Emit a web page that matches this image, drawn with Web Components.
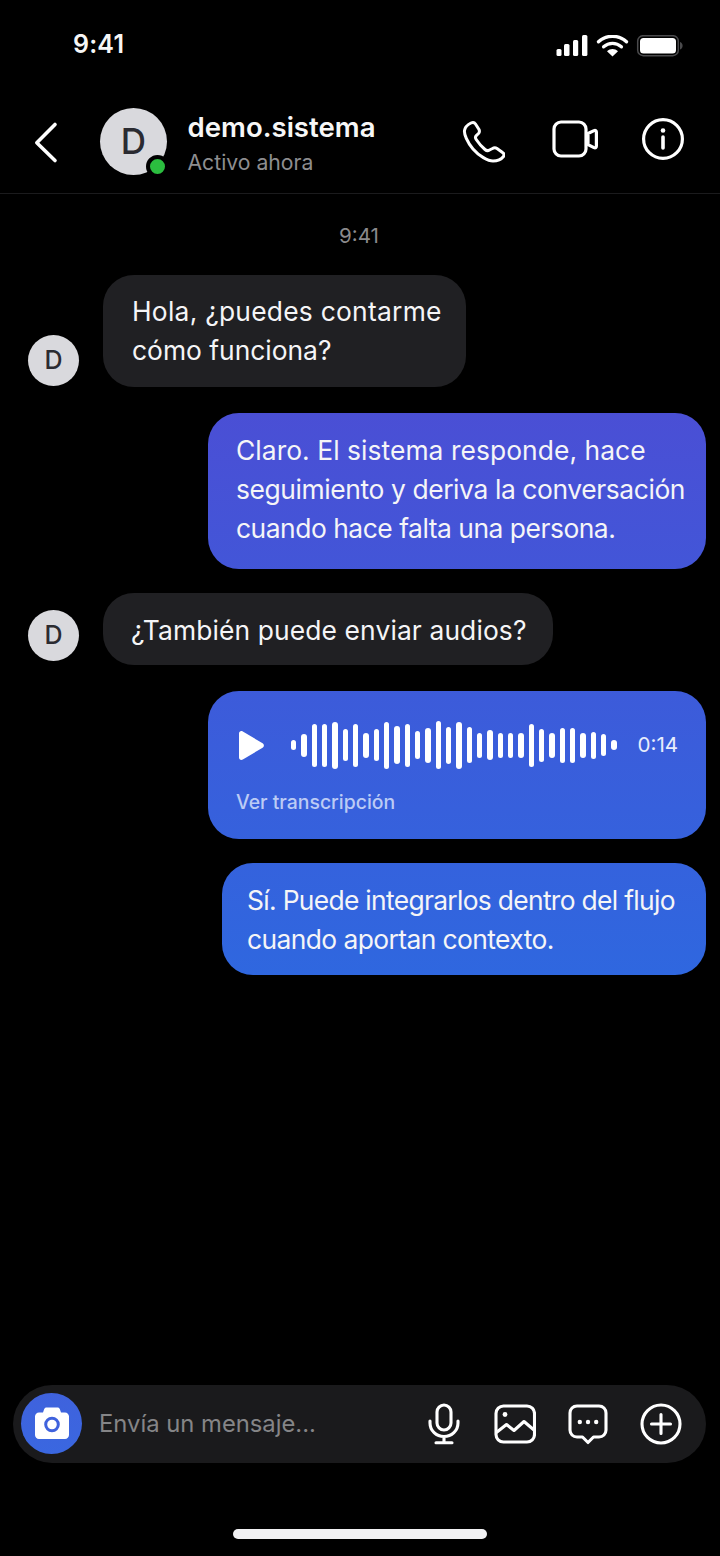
<!DOCTYPE html>
<html lang="es"><head><meta charset="utf-8"><title>Chat</title>
<style>
html,body{margin:0;padding:0;background:#000}
body{font-family:Inter,"Liberation Sans",sans-serif;color:#fff}
chat-message span{display:block}
</style></head>
<body>
<chat-screen>
  <status-bar slot="top" time="9:41"></status-bar>
  <chat-header slot="top" name="demo.sistema" status="Activo ahora"></chat-header>
  <time-stamp>9:41</time-stamp>
  <chat-message style="margin-top:26px;margin-left:28px;--w:363px;--avb:1px;--pt:17px;--pb:17px"><span style="letter-spacing:.25px">Hola, ¿puedes contarme</span><span>cómo funciona?</span></chat-message>
  <chat-message out style="margin-top:26px;--w:498px;--pl:28px;--pt:17.5px;--pb:21.5px"><span style="letter-spacing:.06px">Claro. El sistema responde, hace</span><span style="letter-spacing:-.39px">seguimiento y deriva la conversación</span><span style="letter-spacing:-.47px">cuando hace falta una persona.</span></chat-message>
  <chat-message style="margin-top:24px;margin-left:28px;--w:450px;--avb:4px;--pt:17.5px;--pb:15.5px;--pl:28px"><span style="letter-spacing:.12px">¿También puede enviar audios?</span></chat-message>
  <audio-message style="margin-top:26px" duration="0:14" link="Ver transcripción"></audio-message>
  <chat-message out style="margin-top:24px;--w:484px;--pl:25px;--pt:17.5px;--pb:16.5px"><span style="letter-spacing:-.68px">Sí. Puede integrarlos dentro del flujo</span><span style="letter-spacing:-.58px">cuando aportan contexto.</span></chat-message>
  <chat-composer slot="bottom" placeholder="Envía un mensaje..."></chat-composer>
</chat-screen>
<script>
function comp(name, html){
  customElements.define(name, class extends HTMLElement{
    connectedCallback(){
      if(this.shadowRoot) return;
      const r=this.attachShadow({mode:'open'});
      r.innerHTML=typeof html==='function'?html(this):html;
    }
  });
}
const GRAD='linear-gradient(180deg,#4a4fd5 0,#4a4fd5 413px,#2f67df 975px) fixed';
comp('chat-screen',`<style>
:host{display:flex;flex-direction:column;width:720px;height:1556px;background:#000;overflow:hidden;box-sizing:border-box}
main{flex:1;display:flex;flex-direction:column;min-height:0}
.home{height:10px;width:254px;border-radius:5px;background:#f1f1f3;margin:65px auto 17px}
</style>
<slot name="top"></slot><main><slot></slot></main><slot name="bottom"></slot><div class="home"></div>`);

comp('status-bar',h=>`<style>
:host{display:flex;height:88px;box-sizing:border-box;padding:0 37px 0 73px;justify-content:space-between;align-items:flex-start}
.t{font:600 25px/30px Inter,"Liberation Sans",sans-serif;margin-top:29px;color:#f6f6f6;letter-spacing:.2px}
svg{display:block;margin-top:35px}
</style>
<div class="t">${h.getAttribute('time')}</div>
<svg width="127" height="22" viewBox="0 0 127 22" fill="#fff">
  <rect x="0.5" y="14" width="5" height="7" rx="1.5"/><rect x="8" y="9" width="5.5" height="12" rx="1.5"/>
  <rect x="17" y="5" width="5.2" height="16" rx="1.5"/><rect x="26" y="0" width="5.4" height="21" rx="1.5"/>
  <g fill="none" stroke="#fff" stroke-width="3.3" stroke-linecap="round">
    <path d="M42.5 6.8C50.5 -0.6 62.5 -0.6 70.5 6.8"/><path d="M47.6 11.8C52.8 7.2 60.2 7.2 65.4 11.8"/>
  </g>
  <path d="M51 16.2C54.3 13.3 58.7 13.3 62 16.2L56.5 21.6Z"/>
  <rect x="81.7" y="0.7" width="40.6" height="20" rx="5.5" fill="none" stroke="#4a4a4c" stroke-width="1.5"/>
  <rect x="84" y="3" width="36" height="15.6" rx="3.5"/>
  <path d="M124 7C125.7 7.6 126.6 9 126.6 10.8C126.6 12.6 125.7 14 124 14.6Z" fill="#4a4a4c"/>
</svg>`);

comp('chat-header',h=>`<style>
:host{display:flex;align-items:flex-start;height:106px;box-sizing:border-box;border-bottom:1px solid #1b1b1d;position:relative}
.back{margin:33px 0 0 33px;width:26px;height:44px;display:block;flex:none}
.av{position:relative;width:67px;height:67px;border-radius:50%;background:#d9d9dd;color:#2b2b31;margin:20px 0 0 41px;display:flex;align-items:center;justify-content:center;font:500 35px/1 Inter,"Liberation Sans",sans-serif;flex:none}
.dot{position:absolute;right:-2px;bottom:-3px;width:15px;height:15px;border-radius:50%;background:#2bbd3f;border:4px solid #000}
.tx{margin:21px 0 0 20.5px;flex:1}
.n{font:600 27.6px/36px Inter,"Liberation Sans",sans-serif;color:#f7f7f7}
.s{font:400 21.2px/26px Inter,"Liberation Sans",sans-serif;color:#8e8e90;margin-top:4px}
svg.i{display:block;flex:none}
.icons{display:flex;margin:32px 35px 0 0;align-items:flex-start;gap:0}
</style>
<svg class="back" viewBox="0 0 26 44" fill="none" stroke="#fff" stroke-width="3.6" stroke-linecap="round" stroke-linejoin="round"><path d="M22 3.5L3.8 21.8L22 39.5"/></svg>
<div class="av">D<span class="dot"></span></div>
<div class="tx"><div class="n">${h.getAttribute('name')}</div><div class="s">${h.getAttribute('status')}</div></div>
<div class="icons">
<svg class="i" width="45" height="45" viewBox="0 0 45 45" fill="none" stroke="#fff" stroke-width="3" stroke-linejoin="round" style="margin-top:0;margin-right:47px"><path d="M11 3C8 4.5 5 7.5 4.5 10.5C4 14 7 22 13 29C19 36 28 41 33 41C37 41 41.5 39 43.5 36.5C44.5 35 44 33.5 42.5 32.5L37 28.5C35.5 27.5 34 27.5 32.5 28.5L29.5 30C28 31 26.5 30.8 25 29.5C21.5 26.5 18.5 23 16.2 19.5C15.2 18 15.2 16.5 16.5 15.3L18.5 13.5C19.6 12.2 19.7 11 19 9.5L15.5 4C14.5 2.5 12.7 2.2 11 3Z"/></svg>
<svg class="i" width="46" height="40" viewBox="0 0 46 40" fill="none" stroke="#fff" stroke-width="3.2" stroke-linejoin="round" style="margin-right:43px"><rect x="2" y="2" width="32" height="34" rx="7"/><path d="M36 13.5L42 10.6C43.4 10 44.4 10.6 44.4 12V26C44.4 27.6 43.4 28.2 42 27.6L36 24.6Z"/></svg>
<svg class="i" width="44" height="44" viewBox="0 0 44 44" fill="none" stroke="#fff" stroke-width="3.2" stroke-linecap="round" style="margin-top:-3px"><circle cx="22" cy="22" r="19.4"/><path d="M22 20V31" stroke-width="3.6"/><circle cx="22" cy="13.5" r="2.3" fill="#fff" stroke="none"/></svg>
</div>`);

comp('time-stamp',`<style>
:host{display:block;text-align:center;font:400 20.6px/26px Inter,"Liberation Sans",sans-serif;color:#8a8a8c;margin-top:29px;margin-right:2px}
</style><slot></slot>`);

customElements.define('chat-message',class extends HTMLElement{
  connectedCallback(){
    if(this.shadowRoot) return;
    const out=this.hasAttribute('out');
    const r=this.attachShadow({mode:'open'});
    r.innerHTML=`<style>
:host{display:flex;${out?'justify-content:flex-end;margin-right:14px;':''}}
.av{width:51px;height:51px;border-radius:50%;background:#d9d9dd;color:#2b2b31;display:flex;align-items:center;justify-content:center;font:500 25px/1 Inter,"Liberation Sans",sans-serif;align-self:flex-end;margin:0 24px var(--avb,0) 0;flex:none}
.b{box-sizing:border-box;width:var(--w);padding:var(--pt,17px) 0 var(--pb,17px) var(--pl,29px);border-radius:31px;font:400 26.4px/39px Inter,"Liberation Sans",sans-serif;white-space:nowrap;color:#f5f5f7;
background:${out?GRAD:'#202023'}}
</style>${out?'':'<div class="av">D</div>'}<div class="b"><slot></slot></div>`;
  }
});

const bars=[10,23,43,43,47,32,43,25,32,47,38,43,28,35,48,37,47,36,25,30,25,25,25,43,33,25,35,35,25,27,22,10];
comp('audio-message',h=>`<style>
:host{display:flex;justify-content:flex-end;margin-right:14px}
.b{box-sizing:border-box;width:498px;height:148px;border-radius:31px;background:${GRAD};padding:0 28px;display:flex;flex-direction:column}
.row{display:flex;align-items:center;height:52px;margin-top:28px}
.play{display:block;margin-left:2px;flex:none}
.wave{display:flex;align-items:center;gap:5px;margin-left:26px;flex:none}
.wave i{display:block;width:5.33px;border-radius:3px;background:#fff}
.d{font:400 20.6px/26px Inter,"Liberation Sans",sans-serif;color:#e8edfc;margin-left:21px}
.l{font:500 19.4px/24px Inter,"Liberation Sans",sans-serif;color:#bccbf5;margin-top:19px}
</style><div class="b"><div class="row">
<svg class="play" width="27" height="31" viewBox="0 0 27 31" fill="#fff"><path d="M1 3.5C1 1.5 3 .4 4.8 1.5L24.6 13.3C26.3 14.3 26.3 16.7 24.6 17.7L4.8 29.5C3 30.6 1 29.5 1 27.5Z"/></svg>
<div class="wave">${bars.map(v=>`<i style="height:${v}px"></i>`).join('')}</div>
<div class="d">${h.getAttribute('duration')}</div></div>
<div class="l">${h.getAttribute('link')}</div></div>`);

comp('chat-composer',h=>`<style>
:host{display:flex;align-items:center;box-sizing:border-box;width:693px;height:78px;margin-left:13px;margin-bottom:1px;border-radius:39px;background:#1a1a1c;padding:0 24px 0 8px}
.cam{width:61px;height:61px;border-radius:50%;background:linear-gradient(180deg,#3f62dd,#3a67e0);display:flex;align-items:center;justify-content:center;flex:none;margin-top:-2px}
.p{flex:1;margin-left:17px;font:400 23.8px/30px Inter,"Liberation Sans",sans-serif;color:#858587;white-space:nowrap}
svg{display:block;flex:none}
.ic{fill:none;stroke:#fff;stroke-width:3.1;stroke-linecap:round;stroke-linejoin:round}
</style>
<div class="cam"><svg width="36" height="34" viewBox="0 0 36 34"><path fill="#fff" d="M12.5 1.5H23.5C24.6 1.5 25.4 2.1 25.8 3L27 6.5H31C33.2 6.5 35 8.3 35 10.5V29C35 31.2 33.2 33 31 33H5C2.8 33 1 31.2 1 29V10.5C1 8.3 2.8 6.5 5 6.5H9L10.2 3C10.6 2.1 11.4 1.5 12.5 1.5Z"/><circle cx="18" cy="18.5" r="6.3" fill="none" stroke="#3f62dd" stroke-width="3"/></svg></div>
<div class="p">${h.getAttribute('placeholder')}</div>
<svg class="ic" width="34" height="42" viewBox="0 0 34 42" style="margin-right:33px"><rect x="10" y="2" width="14" height="25" rx="7"/><path d="M3 18V20C3 27.7 9.3 33.5 17 33.5C24.7 33.5 31 27.7 31 20V18M17 33.5V39M9 39.8H25"/></svg>
<svg class="ic" width="42" height="40" viewBox="0 0 42 40" style="margin-right:32px"><rect x="2" y="2" width="38.5" height="36" rx="7.5"/><circle cx="11" cy="10.5" r="2.4" fill="#fff" stroke="none"/><path d="M3 28L12.5 20.5L20 26.5L30 17.5L40 26"/></svg>
<svg class="ic" width="40" height="41" viewBox="0 0 40 41" style="margin-right:32px"><path d="M9 2H31C35 2 38 5 38 9V26C38 30 35 33 31 33H25.5L20 38.5L14.5 33H9C5 33 2 30 2 26V9C2 5 5 2 9 2Z"/><g fill="#fff" stroke="none"><circle cx="11.8" cy="18" r="2.2"/><circle cx="20" cy="18" r="2.2"/><circle cx="28.2" cy="18" r="2.2"/></g></svg>
<svg class="ic" width="42" height="42" viewBox="0 0 42 42"><circle cx="21" cy="21" r="19"/><path d="M21 11.5V30.5M11.5 21H30.5"/></svg>`);
</script>
</body></html>
